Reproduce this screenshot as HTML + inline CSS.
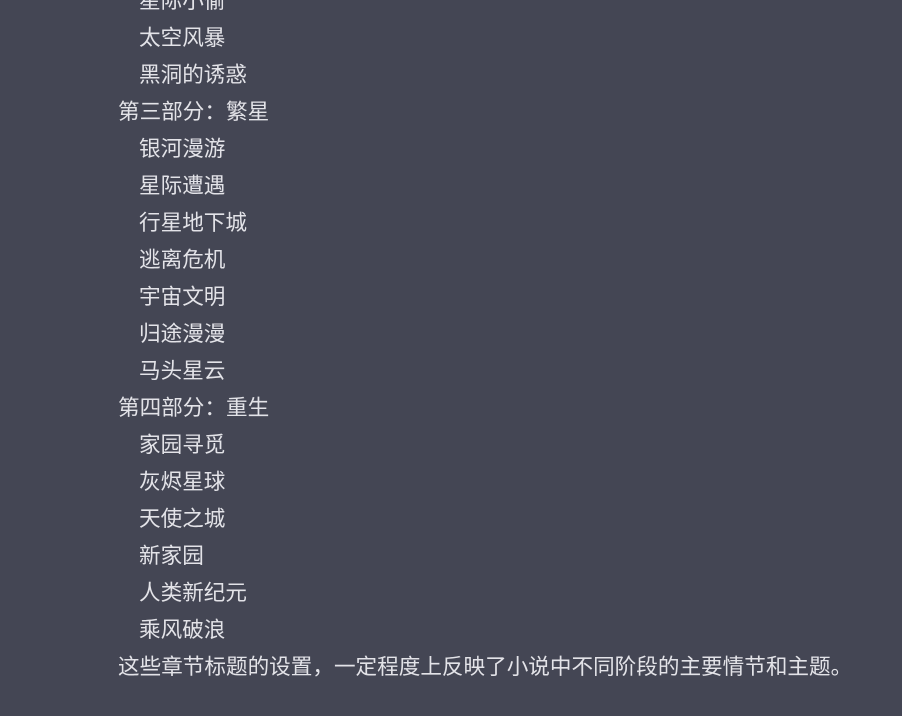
<!DOCTYPE html>
<html><head><meta charset="utf-8"><style>
html,body{margin:0;padding:0;}
body{width:902px;height:716px;overflow:hidden;background:#444654;position:relative;}
.c{position:absolute;left:118px;top:-18px;font-family:"Liberation Sans","Noto Sans CJK SC",sans-serif;font-size:21.6px;line-height:37px;color:#e3e3e8;white-space:nowrap;}
.i{padding-left:21px;}
</style></head><body>
<div class="c">
<div class="i">星际小偷</div>
<div class="i">太空风暴</div>
<div class="i">黑洞的诱惑</div>
<div>第三部分：繁星</div>
<div class="i">银河漫游</div>
<div class="i">星际遭遇</div>
<div class="i">行星地下城</div>
<div class="i">逃离危机</div>
<div class="i">宇宙文明</div>
<div class="i">归途漫漫</div>
<div class="i">马头星云</div>
<div>第四部分：重生</div>
<div class="i">家园寻觅</div>
<div class="i">灰烬星球</div>
<div class="i">天使之城</div>
<div class="i">新家园</div>
<div class="i">人类新纪元</div>
<div class="i">乘风破浪</div>
<div>这些章节标题的设置，一定程度上反映了小说中不同阶段的主要情节和主题。</div>
</div>
</body></html>
